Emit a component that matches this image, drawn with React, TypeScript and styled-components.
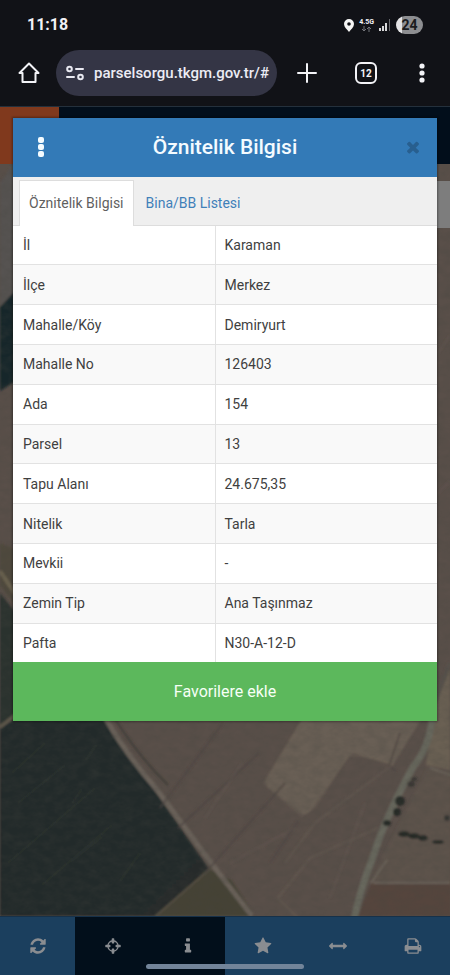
import React from "react";
import styled, { createGlobalStyle, css } from "styled-components";

const GlobalStyle = createGlobalStyle`
  *, *::before, *::after { box-sizing: border-box; }
  body { margin: 0; background: #111217; }
  body, button, input { font-family: Roboto, "Liberation Sans", sans-serif; }
  button { border: 0; padding: 0; background: none; color: inherit; cursor: pointer; }
`;

const Screen = styled.div`
  display: flex;
  flex-direction: column;
  min-height: 100vh;
`;

const BrowserChrome = styled.header`
  background: #111217;
  color: #f1f1f5;
  border-bottom: 1px solid #24303c;
`;

const StatusBar = styled.div`
  display: flex;
  align-items: center;
  justify-content: space-between;
  height: 50px;
  padding: 0 27px;
`;

const Clock = styled.time`
  font-size: 16px;
  font-weight: 700;
  line-height: 20px;
`;

const StatusIcons = styled.div`
  display: flex;
  align-items: center;
  gap: 5px;
`;

const Network = styled.span`
  display: flex;
  flex-direction: column;
  align-items: center;
  font-size: 7px;
  font-weight: 700;
  line-height: 8px;
`;

const Battery = styled.span`
  width: 27px;
  border-radius: 9px;
  background: linear-gradient(90deg, #e4e4e6 24%, #8d8e91 24%);
  color: #1b1c20;
  font-size: 14px;
  font-weight: 700;
  line-height: 18px;
  text-align: center;
`;

const AddressBar = styled.div`
  display: flex;
  align-items: center;
  height: 56px;
  padding: 0 10px 10px 17px;
`;

const ChromeButton = styled.button<{ $width: number }>`
  display: flex;
  align-items: center;
  justify-content: center;
  width: ${(p) => p.$width}px;
  height: 40px;
`;

const UrlField = styled.label`
  display: flex;
  flex: 1;
  align-items: center;
  gap: 10px;
  min-width: 0;
  height: 46px;
  margin: 0 8px 0 16px;
  padding: 0 6px 0 10px;
  border-radius: 23px;
  background: #343545;
`;

const UrlInput = styled.input`
  flex: 1;
  min-width: 0;
  padding: 0;
  border: 0;
  outline: 0;
  background: none;
  color: #ececf4;
  font-size: 15px;
  font-weight: 500;
  line-height: 24px;
`;

const Site = styled.div`
  display: grid;
  flex: 1;
`;

const layer = css`
  grid-area: 1 / 1;
`;

const Backdrop = styled.div`
  ${layer}
  display: flex;
  flex-direction: column;
`;

const SiteHeader = styled.div`
  display: flex;
  height: 57px;
  background: #020e1b;
`;

const Brand = styled.div`
  width: 59px;
  background: #80391d;
`;

const MapArea = styled.main`
  position: relative;
  flex: 1;
  overflow: hidden;
  background: #574c47;
`;

const MapDrawing = styled.svg`
  position: absolute;
  inset: 0;
  width: 100%;
  height: 100%;
`;

const MapPanel = styled.div`
  position: absolute;
  top: 17px;
  right: 0;
  width: 32px;
  height: 47px;
  background: #7d7d7d;
`;

const Toolbar = styled.nav`
  position: relative;
  display: flex;
  height: 59px;
  border-top: 1px solid #173149;
`;

const ToolButton = styled.button<{ $dark?: boolean }>`
  display: flex;
  flex: 1;
  align-items: center;
  justify-content: center;
  background: ${(p) => (p.$dark ? "#020f1b" : "#1b3f5e")};
  color: #8a8d91;
`;

const GestureBar = styled.span`
  position: absolute;
  bottom: 6px;
  left: 50%;
  width: 158px;
  height: 5px;
  margin-left: -79px;
  border-radius: 3px;
  background: #728499;
`;

const Dialog = styled.section`
  ${layer}
  z-index: 1;
  align-self: start;
  margin: 11px 13px 0 13px;
  background: #fff;
  box-shadow: 0 0 2px 1px rgba(0, 0, 0, 0.35);
`;

const DialogHeader = styled.div`
  display: grid;
  grid-template-columns: 56px 1fr 56px;
  align-items: center;
  height: 59px;
  padding-bottom: 1px;
  background: #337ab7;
  color: #f4fbff;
`;

const DialogTitle = styled.h1`
  margin: 0;
  font-size: 21px;
  font-weight: 500;
  line-height: 28px;
  text-align: center;
`;

const HeaderButton = styled.button<{ $muted?: boolean }>`
  display: flex;
  align-items: center;
  justify-content: center;
  justify-self: ${(p) => (p.$muted ? "end" : "stretch")};
  min-width: 48px;
  height: 40px;
  color: ${(p) => (p.$muted ? "#285f8f" : "inherit")};
`;

const Tabs = styled.div`
  display: flex;
  height: 49px;
  padding: 3px 6px 0;
  border-bottom: 1px solid #ddd;
  background: #efefef;
`;

const Tab = styled.button<{ $active?: boolean }>`
  margin-bottom: -1px;
  padding: 0 ${(p) => (p.$active ? 9 : 11)}px 2px;
  border: 1px solid ${(p) => (p.$active ? "#ddd" : "transparent")};
  border-bottom: 0;
  background: ${(p) => (p.$active ? "#fff" : "transparent")};
  color: ${(p) => (p.$active ? "#5f5f5f" : "#3f80b9")};
  font-size: 14px;
  line-height: 20px;
`;

const Attributes = styled.table`
  width: 100%;
  height: 436px;
  border-collapse: collapse;
  table-layout: fixed;
  color: #3f3f3f;
  font-size: 14px;
  line-height: 20px;
`;

const Row = styled.tr`
  &:nth-child(even) { background: #f9f9f9; }
  & + & { border-top: 1px solid #e2e2e2; }
`;

const Name = styled.th`
  width: 202px;
  padding: 0 10px;
  border-right: 1px solid #e2e2e2;
  font-weight: 400;
  text-align: left;
`;

const Value = styled.td`
  padding: 0 9px;
`;

const FavoriteButton = styled.button`
  display: block;
  width: 100%;
  height: 59px;
  background: #5cb85c;
  color: #f6fff6;
  font-size: 16px;
  line-height: 24px;
`;

const ICONS = {
  refresh:
    "M1639 1056q0 5-1 7-64 268-268 434.500t-478 166.500q-146 0-282.500-55t-243.500-157l-129 129q-19 19-45 19t-45-19-19-45v-448q0-26 19-45t45-19h448q26 0 45 19t19 45-19 45l-137 137q71 66 161 102t187 36q134 0 250-65t186-179q11-17 53-117 8-23 30-23h192q13 0 22.500 9.500t9.500 22.500zm25-800v448q0 26-19 45t-45 19h-448q-26 0-45-19t-19-45 19-45l138-138q-148-137-349-137-134 0-250 65t-186 179q-11 17-53 117-8 23-30 23h-199q-13 0-22.500-9.500t-9.500-22.500v-7q65-268 270-434.500t480-166.500q146 0 284 55.500t245 156.500l130-129q19-19 45-19t45 19 19 45z",
  crosshairs:
    "M1325 1024h-109q-26 0-45-19t-19-45v-128q0-26 19-45t45-19h109q-32-108-112.500-188.500t-188.500-112.500v109q0 26-19 45t-45 19h-128q-26 0-45-19t-19-45v-109q-108 32-188.500 112.500t-112.500 188.500h109q26 0 45 19t19 45v128q0 26-19 45t-45 19h-109q32 108 112.500 188.500t188.500 112.500v-109q0-26 19-45t45-19h128q26 0 45 19t19 45v109q108-32 188.500-112.500t112.500-188.500zm339-192v128q0 26-19 45t-45 19h-143q-37 161-154.500 278.500t-278.500 154.500v143q0 26-19 45t-45 19h-128q-26 0-45-19t-19-45v-143q-161-37-278.500-154.500t-154.500-278.500h-143q-26 0-45-19t-19-45v-128q0-26 19-45t45-19h143q37-161 154.500-278.500t278.500-154.500v-143q0-26 19-45t45-19h128q26 0 45 19t19 45v143q161 37 278.500 154.500t154.500 278.500h143q26 0 45 19t19 45z",
  info: "M1216 1344v128q0 26-19 45t-45 19h-512q-26 0-45-19t-19-45v-128q0-26 19-45t45-19h64v-384h-64q-26 0-45-19t-19-45v-128q0-26 19-45t45-19h384q26 0 45 19t19 45v576h64q26 0 45 19t19 45zm-128-1152v192q0 26-19 45t-45 19h-256q-26 0-45-19t-19-45v-192q0-26 19-45t45-19h256q26 0 45 19t19 45z",
  star: "M1728 647q0 22-26 48l-363 354 86 500q1 7 1 20 0 21-10.500 35.500t-30.500 14.500q-19 0-40-12l-449-236-449 236q-22 12-40 12-21 0-31.500-14.500t-10.500-35.500q0-6 2-20l86-500-364-354q-25-27-25-48 0-37 56-46l502-73 225-455q19-41 49-41t49 41l225 455 502 73q56 9 56 46z",
  measure:
    "M1792 896q0 26-19 45l-256 256q-19 19-45 19t-45-19-19-45v-128h-1024v128q0 26-19 45t-45 19-45-19l-256-256q-19-19-19-45t19-45l256-256q19-19 45-19t45 19 19 45v128h1024v-128q0-26 19-45t45-19 45 19l256 256q19 19 19 45z",
  print:
    "M448 1536h896v-256h-896v256zm0-640h896v-384h-160q-40 0-68-28t-28-68v-160h-640v640zm1152 64q0-26-19-45t-45-19-45 19-19 45 19 45 45 19 45-19 19-45zm128 0v416q0 13-9.500 22.500t-22.500 9.500h-224v160q0 40-28 68t-68 28h-960q-40 0-68-28t-28-68v-160h-224q-13 0-22.500-9.500t-9.500-22.500v-416q0-79 56.500-135.500t135.500-56.500h64v-544q0-40 28-68t68-28h672q40 0 88 20t76 48l152 152q28 28 48 76t20 88v256h64q79 0 135.500 56.500t56.500 135.500z",
  close:
    "M1490 1322q0 40-28 68l-136 136q-28 28-68 28t-68-28l-294-294-294 294q-28 28-68 28t-68-28l-136-136q-28-28-28-68t28-68l294-294-294-294q-28-28-28-68t28-68l136-136q28-28 68-28t68 28l294 294 294-294q28-28 68-28t68 28l136 136q28 28 28 68t-28 68l-294 294 294 294q28 28 28 68z",
};

function Icon({ name, size = 18 }: { name: keyof typeof ICONS; size?: number }) {
  return (
    <svg width={size} height={size} viewBox="0 0 1792 1792" fill="currentColor" aria-hidden="true">
      <path d={ICONS[name]} />
    </svg>
  );
}

const TOOLS: { name: keyof typeof ICONS; label: string; dark?: boolean }[] = [
  { name: "refresh", label: "Yenile" },
  { name: "crosshairs", label: "Konum", dark: true },
  { name: "info", label: "Bilgi", dark: true },
  { name: "star", label: "Favoriler" },
  { name: "measure", label: "Ölçüm" },
  { name: "print", label: "Yazdır" },
];

const ATTRIBUTES = [
  ["İl", "Karaman"],
  ["İlçe", "Merkez"],
  ["Mahalle/Köy", "Demiryurt"],
  ["Mahalle No", "126403"],
  ["Ada", "154"],
  ["Parsel", "13"],
  ["Tapu Alanı", "24.675,35"],
  ["Nitelik", "Tarla"],
  ["Mevkii", "-"],
  ["Zemin Tip", "Ana Taşınmaz"],
  ["Pafta", "N30-A-12-D"],
];

function SatelliteMap() {
  return (
    <MapDrawing viewBox="0 0 450 753" preserveAspectRatio="xMidYMax slice" aria-hidden="true">
      <defs>
        <filter id="soft" x="-5%" y="-5%" width="110%" height="110%">
          <feGaussianBlur stdDeviation="1" />
        </filter>
        <filter id="grain" x="0" y="0" width="100%" height="100%">
          <feTurbulence type="fractalNoise" baseFrequency="0.09 0.14" numOctaves="4" seed="7" />
          <feColorMatrix values="0 0 0 0 0.06  0 0 0 0 0.06  0 0 0 0 0.05  0.9 0.6 0 0 -0.55" />
        </filter>
        <linearGradient id="field" x1="0" y1="0" x2="1" y2="1">
          <stop offset="0" stopColor="#242c2b" />
          <stop offset="0.5" stopColor="#20292a" />
          <stop offset="1" stopColor="#272c29" />
        </linearGradient>
      </defs>
      <rect width="450" height="753" fill="#594f49" />
      <g filter="url(#soft)">
        <path d="M0 20L14 0V130L0 144Z" fill="#565351" />
        <path d="M0 144L14 129V219L0 228Z" fill="#182829" />
        <path d="M0 380L14 386V440L0 422Z" fill="#504a3c" />
        <path d="M0 408L16 432" stroke="#6b6250" strokeWidth="4" />
        <path d="M0 430L16 450V550L0 562Z" fill="#2b302d" />
        <path d="M0 566L30 545H97L209 706L155 753H0Z" fill="url(#field)" />
        <path d="M0 564L20 548" stroke="#5f594b" strokeWidth="3" />
        <path d="M209 706L155 753H255L231 717Z" fill="#454236" />
        <path d="M212 704L156 753" stroke="#565043" strokeWidth="2" />
        <path d="M106 556Q125 590 158 628L215 705L252 753" fill="none" stroke="#6a625a" strokeWidth="5" />
        <path d="M115 556Q140 595 168 622" fill="none" stroke="#403d38" strokeWidth="2" />
        <path d="M306 550L266 617Q265 624 272 627L300 650Q306 654 312 646L348 595Q353 587 362 593L393 602L425 550Z" fill="#695f54" />
        <path d="M306 550L264 620L301 653L315 644L348 593L359 592L393 601" fill="none" stroke="#766b5e" strokeWidth="1" opacity=".6" />
        <path d="M223 560L160 645M259 590L178 665M205 710L285 620M298 658L270 700M400 570L389 603L396 608" fill="none" stroke="#4d4541" strokeWidth="2" opacity=".7" />
        <path d="M392 602L315 660L285 700M378 665L310 695L278 735L301 758" fill="none" stroke="#685d54" strokeWidth="2" opacity=".55" />
        <path d="M428 604L451 610V720H370L397 665Z" fill="#5d534c" />
        <path d="M434 545L450 500V607L426 602Z" fill="#6b6053" />
        <path d="M371 721L451 719V753H358Z" fill="#54453c" />
        <path d="M432 556Q429 585 413 604Q385 655 373 694Q361 724 354 756" fill="none" stroke="#68675d" strokeWidth="7" />
        <path d="M450 500L430 552" stroke="#57514b" strokeWidth="4" />
        <path d="M374 720H450M387 697L371 720M430 605L451 612" stroke="#6c645a" strokeWidth="2" fill="none" />
        <g fill="#272a27">
          <ellipse cx="400" cy="638" rx="5" ry="5" />
          <ellipse cx="397" cy="649" rx="4" ry="4" />
          <ellipse cx="387" cy="660" rx="4" ry="3" />
          <ellipse cx="404" cy="671" rx="6" ry="3" />
          <ellipse cx="414" cy="673" rx="6" ry="3" />
          <ellipse cx="423" cy="675" rx="5" ry="3" />
          <ellipse cx="438" cy="679" rx="6" ry="2" />
          <ellipse cx="411" cy="621" rx="4" ry="3" opacity=".6" />
          <ellipse cx="414" cy="616" rx="3" ry="2" opacity=".6" />
          <ellipse cx="447" cy="655" rx="3" ry="3" opacity=".7" />
        </g>
        <path d="M8 700L95 625M18 640L65 602M42 722L112 662M72 640L82 626M72 698L102 674M12 610L45 580M86 597L96 582M120 718L140 690" stroke="#3c4037" strokeWidth="1" fill="none" opacity=".6" />
        <path d="M230 700L295 665M205 655L242 600M330 735L365 640M438 190L450 173M438 330L450 318" stroke="#675b55" strokeWidth="2" fill="none" opacity=".4" />
      </g>
      <rect width="450" height="753" filter="url(#grain)" opacity=".4" />
    </MapDrawing>
  );
}

export default function App() {
  return (
    <>
      <GlobalStyle />
      <Screen>
        <BrowserChrome>
          <StatusBar>
            <Clock>11:18</Clock>
            <StatusIcons>
              <svg width="10" height="13" viewBox="0 0 10 13" aria-hidden="true">
                <path fill="#f5f5f5" fillRule="evenodd" d="M5 0a5 5 0 0 1 5 5c0 3-3 5.500-5 8C3 10.500 0 8 0 5a5 5 0 0 1 5-5zm0 3.200a1.800 1.800 0 1 0 0 3.600 1.800 1.800 0 0 0 0-3.600z" />
              </svg>
              <Network>
                4.5G
                <svg width="11" height="6" viewBox="0 0 11 6" fill="none" stroke="#73747a" aria-hidden="true">
                  <path d="M3 0v5M1 3l2 2 2-2M8 6V1M6 3l2-2 2 2" />
                </svg>
              </Network>
              <svg width="12" height="12" viewBox="0 0 12 12" aria-hidden="true">
                <path d="M0 9h2v3H0zM3 7h2v5H3zM6 4h2v8H6z" fill="#d8d8da" />
                <path d="M10 0h1v12h-1z" fill="#66676b" />
              </svg>
              <Battery>24</Battery>
            </StatusIcons>
          </StatusBar>
          <AddressBar>
            <ChromeButton $width={23} aria-label="Ana sayfa">
              <svg width="22" height="22" viewBox="0 0 22 22" fill="none" stroke="#f3f3f7" strokeWidth="2" strokeLinejoin="round" strokeLinecap="round" aria-hidden="true">
                <path d="M1.500 11L11 1.500 20.500 11H17.500V20H4.500V11Z" />
              </svg>
            </ChromeButton>
            <UrlField>
              <svg width="18" height="16" viewBox="0 0 18 16" fill="none" stroke="#e9e9f1" strokeWidth="2" strokeLinecap="round" aria-hidden="true">
                <circle cx="3.500" cy="4" r="2.300" />
                <path d="M10 4h7M1 12h7" />
                <circle cx="14.500" cy="12" r="2.300" />
              </svg>
              <UrlInput aria-label="Adres" defaultValue="parselsorgu.tkgm.gov.tr/#" />
            </UrlField>
            <ChromeButton $width={44} aria-label="Yeni sekme">
              <svg width="20" height="20" viewBox="0 0 20 20" stroke="#f3f3f7" strokeWidth="2" strokeLinecap="round" aria-hidden="true">
                <path d="M10 1v18M1 10h18" />
              </svg>
            </ChromeButton>
            <ChromeButton $width={74} aria-label="Sekmeler">
              <svg width="22" height="22" viewBox="0 0 22 22" aria-hidden="true">
                <rect x="1" y="1" width="20" height="20" rx="5" fill="none" stroke="#f3f3f7" strokeWidth="2" />
                <text x="11" y="15" fontSize="10" fontWeight="700" fill="#f3f3f7" textAnchor="middle">12</text>
              </svg>
            </ChromeButton>
            <ChromeButton $width={37} aria-label="Menü">
              <svg width="6" height="20" viewBox="0 0 6 20" fill="#f3f3f7" aria-hidden="true">
                <circle cx="3" cy="3" r="2.600" />
                <circle cx="3" cy="10" r="2.600" />
                <circle cx="3" cy="17" r="2.600" />
              </svg>
            </ChromeButton>
          </AddressBar>
        </BrowserChrome>
        <Site>
          <Backdrop>
            <SiteHeader>
              <Brand />
            </SiteHeader>
            <MapArea>
              <SatelliteMap />
              <MapPanel />
            </MapArea>
            <Toolbar>
              {TOOLS.map((tool) => (
                <ToolButton key={tool.name} $dark={tool.dark} aria-label={tool.label}>
                  <Icon name={tool.name} />
                </ToolButton>
              ))}
              <GestureBar />
            </Toolbar>
          </Backdrop>
          <Dialog aria-labelledby="dialog-title">
            <DialogHeader>
              <HeaderButton aria-label="Seçenekler">
                <svg width="6" height="20" viewBox="0 0 6 20" fill="currentColor" aria-hidden="true">
                  <rect y="0" width="6" height="6" rx="2" />
                  <rect y="7" width="6" height="6" rx="2" />
                  <rect y="14" width="6" height="6" rx="2" />
                </svg>
              </HeaderButton>
              <DialogTitle id="dialog-title">Öznitelik Bilgisi</DialogTitle>
              <HeaderButton $muted aria-label="Kapat">
                <Icon name="close" />
              </HeaderButton>
            </DialogHeader>
            <Tabs role="tablist">
              <Tab role="tab" aria-selected="true" $active>Öznitelik Bilgisi</Tab>
              <Tab role="tab" aria-selected="false">Bina/BB Listesi</Tab>
            </Tabs>
            <Attributes>
              <tbody>
                {ATTRIBUTES.map(([name, value]) => (
                  <Row key={name}>
                    <Name scope="row">{name}</Name>
                    <Value>{value}</Value>
                  </Row>
                ))}
              </tbody>
            </Attributes>
            <FavoriteButton>Favorilere ekle</FavoriteButton>
          </Dialog>
        </Site>
      </Screen>
    </>
  );
}
